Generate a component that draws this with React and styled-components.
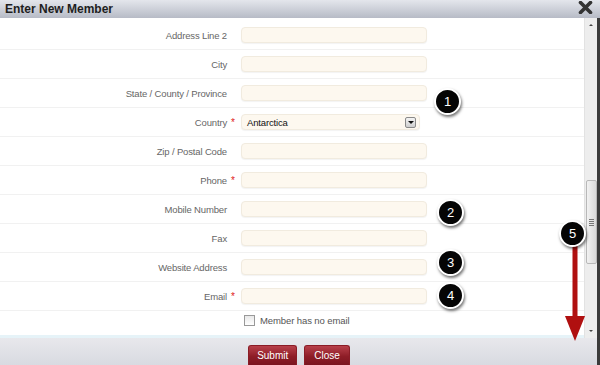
import styled, { createGlobalStyle } from 'styled-components';

const GlobalStyle = createGlobalStyle`
  html, body { margin: 0; padding: 0; }
  body { font-family: "Liberation Sans", Arial, sans-serif; background: #fff; }
`;

const Dialog = styled.div`
  position: relative;
  width: 600px;
  height: 365px;
  display: flex;
  flex-direction: column;
  overflow: hidden;
  background: #fff;
`;

const Header = styled.div`
  height: 18px;
  flex: none;
  display: flex;
  align-items: center;
  justify-content: space-between;
  padding: 0 7px 0 5px;
  background: linear-gradient(#e4e6ec, #b7bbc6);
  color: #1e1e1e;
  font-weight: bold;
  font-size: 12px;
  line-height: 18px;
`;

const CloseIcon = styled.svg`
  width: 15px;
  height: 13px;
  margin-top: -4px;
`;

const Body = styled.div`
  flex: 1;
  display: flex;
  min-height: 0;
`;

const Form = styled.div`
  flex: 1;
  display: flex;
  flex-direction: column;
  padding-top: 3px;
  border-bottom: 3px solid #e6f3f8;
`;

const Row = styled.div`
  height: 28px;
  flex: none;
  display: grid;
  grid-template-columns: 227px 14px 1fr;
  align-items: center;
  border-bottom: 1px solid #f1f1f1;
  font-size: 9.5px;
  letter-spacing: -0.15px;
  color: #666;
`;

const Label = styled.div`
  text-align: right;
`;

const Star = styled.span`
  color: #e02020;
  font-size: 10px;
  padding-left: 4px;
`;

const Input = styled.div`
  width: ${p => p.$w || 186}px;
  height: 16px;
  box-sizing: border-box;
  background: #fdf8ef;
  border: 1px solid #f1ebdf;
  border-radius: 4px;
  box-shadow: 0 1px 1px rgba(0, 0, 0, 0.05);
  display: flex;
  align-items: center;
  justify-content: space-between;
  padding: 0 3px 0 5px;
  color: #111;
  font-size: 9.5px;
`;

const DropButton = styled.div`
  width: 11px;
  height: 11px;
  box-sizing: border-box;
  border: 1px solid #8a8a8a;
  border-radius: 2px;
  background: linear-gradient(#f4f4f4, #cfcfcf);
  display: flex;
  align-items: center;
  justify-content: center;
  &::after {
    content: '';
    border-left: 3px solid transparent;
    border-right: 3px solid transparent;
    border-top: 3px solid #111;
  }
`;

const CheckRow = styled.div`
  flex: 1;
  display: flex;
  align-items: center;
  padding-left: 244px;
  gap: 5px;
  font-size: 9.5px;
  letter-spacing: -0.1px;
  color: #555;
  padding-bottom: 6px;
`;

const Box = styled.span`
  width: 9px;
  height: 9px;
  border: 1px solid #999;
  background: linear-gradient(#e8e8e8, #fff);
`;

const Scrollbar = styled.div`
  width: 12px;
  flex: none;
  display: flex;
  flex-direction: column;
  align-items: stretch;
  background: #ededed;
  border-left: 1px solid #e2e2e2;
`;

const Arrow = styled.div`
  height: 14px;
  display: flex;
  align-items: center;
  justify-content: center;
  &::after {
    content: '';
    border-left: 2px solid transparent;
    border-right: 2px solid transparent;
    ${p => (p.$down ? 'border-top' : 'border-bottom')}: 2px solid #444;
  }
`;

const Thumb = styled.div`
  margin-top: 148px;
  height: 82px;
  border: 1px solid #b8b8b8;
  border-radius: 2px;
  background: linear-gradient(90deg, #f2f2f2, #d9d9d9);
  display: flex;
  flex-direction: column;
  align-items: center;
  justify-content: center;
  gap: 1px;
  margin-left: 1px;
`;

const Grip = styled.span`
  width: 5px;
  height: 1px;
  background: #777;
`;

const Spacer = styled.div`
  flex: 1;
`;

const Edge = styled.div`
  width: 3px;
  flex: none;
  background: #3b3b3b;
`;

const Footer = styled.div`
  height: 27px;
  flex: none;
  display: flex;
  justify-content: center;
  align-items: flex-end;
  gap: 7px;
  padding-left: 1px;
  background: linear-gradient(#e8e8ec, #d8dae1);
  border-right: 3px solid #3b3b3b;
`;

const Button = styled.div`
  height: 19px;
  padding: 0 ${p => p.$pad || 9}px;
  display: flex;
  align-items: center;
  border: 1px solid #8a1c26;
  border-bottom: none;
  border-radius: 3px 3px 0 0;
  background: linear-gradient(#b8404a, #8e1d27 55%, #7a1520);
  color: #fff;
  font-size: 10px;
`;

const Badge = styled.div`
  position: absolute;
  left: ${p => p.$x - 13}px;
  top: ${p => p.$y - 13}px;
  width: 23px;
  height: 23px;
  border-radius: 50%;
  background: #050505;
  border: 2px solid #fff;
  box-shadow: 1px 2px 3px rgba(0, 0, 0, 0.55);
  color: #fff;
  font-size: 13px;
  display: flex;
  align-items: center;
  justify-content: center;
`;

const ArrowSvg = styled.svg`
  position: absolute;
  left: 562px;
  top: 244px;
`;

const fields = [
  { label: 'Address Line 2' },
  { label: 'City' },
  { label: 'State / County / Province' },
  { label: 'Country', req: true, select: 'Antarctica' },
  { label: 'Zip / Postal Code' },
  { label: 'Phone', req: true },
  { label: 'Mobile Number' },
  { label: 'Fax' },
  { label: 'Website Address' },
  { label: 'Email', req: true },
];

const badges = [
  { n: 1, x: 447, y: 101 },
  { n: 2, x: 450, y: 212 },
  { n: 3, x: 450, y: 262 },
  { n: 4, x: 450, y: 295 },
  { n: 5, x: 572, y: 233 },
];

export default function App() {
  return (
    <>
      <GlobalStyle />
      <Dialog>
        <Header>
          <span>Enter New Member</span>
          <CloseIcon viewBox="0 0 15 13">
            <path d="M2.5 1.5 L12.5 11.5 M12.5 1.5 L2.5 11.5" stroke="#333" strokeWidth="3.6" strokeLinecap="round" />
          </CloseIcon>
        </Header>
        <Body>
          <Form>
            {fields.map(f => (
              <Row key={f.label}>
                <Label>{f.label}</Label>
                <span>{f.req && <Star>*</Star>}</span>
                {f.select ? (
                  <Input $w={179}>
                    {f.select}
                    <DropButton />
                  </Input>
                ) : (
                  <Input />
                )}
              </Row>
            ))}
            <CheckRow>
              <Box />
              Member has no email
            </CheckRow>
          </Form>
          <Scrollbar>
            <Arrow />
            <Thumb>
              <Grip />
              <Grip />
              <Grip />
              <Grip />
            </Thumb>
            <Spacer />
            <Arrow $down />
          </Scrollbar>
          <Edge />
        </Body>
        <Footer>
          <Button $pad={8}>Submit</Button>
          <Button $pad={9}>Close</Button>
        </Footer>
        <ArrowSvg width="26" height="98" viewBox="0 0 26 98">
          <rect x="10.5" y="0" width="5" height="74" fill="#b01010" />
          <path d="M3 72 L23 72 L13 97 Z" fill="#b01010" />
        </ArrowSvg>
        {badges.map(b => (
          <Badge key={b.n} $x={b.x} $y={b.y}>
            {b.n}
          </Badge>
        ))}
      </Dialog>
    </>
  );
}
